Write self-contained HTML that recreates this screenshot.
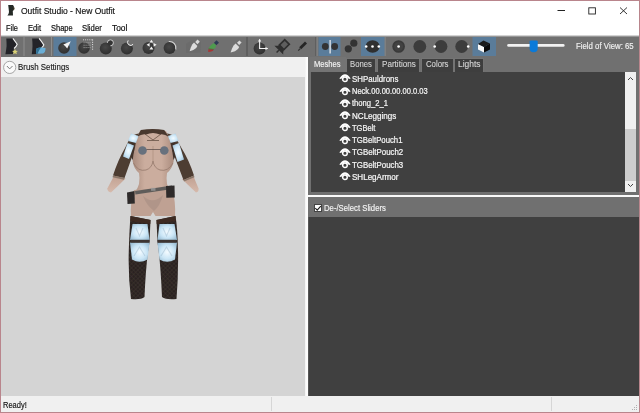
<!DOCTYPE html>
<html><head><meta charset="utf-8">
<style>
*{margin:0;padding:0;box-sizing:border-box}
html,body{width:640px;height:413px;overflow:hidden;background:#f0f0f0;font-family:"Liberation Sans",sans-serif}
.a{position:absolute}
.t{position:absolute;white-space:nowrap;line-height:1;transform-origin:0 0}
</style></head><body>
<div class="a" style="left:0;top:0;width:640px;height:413px;border-style:solid;border-color:#b9858c;border-width:1px 1.5px 1.8px 1px;background:#f0f0f0"></div>
<div class="a" style="left:1px;top:1px;width:638px;height:35px;background:#fff"></div>
<div class="t" style="left:20.80px;top:6.84px;font-size:8.70px;color:#111;transform:scaleX(0.978);-webkit-text-stroke:0.15px #111;">Outfit Studio - New Outfit</div>
<div class="t" style="left:5.50px;top:23.55px;font-size:8.80px;color:#111;transform:scaleX(0.846);-webkit-text-stroke:0.2px #111;">File</div>
<div class="t" style="left:27.65px;top:23.55px;font-size:8.80px;color:#111;transform:scaleX(0.864);-webkit-text-stroke:0.2px #111;">Edit</div>
<div class="t" style="left:50.60px;top:23.55px;font-size:8.80px;color:#111;transform:scaleX(0.849);-webkit-text-stroke:0.2px #111;">Shape</div>
<div class="t" style="left:82.00px;top:23.55px;font-size:8.80px;color:#111;transform:scaleX(0.878);-webkit-text-stroke:0.2px #111;">Slider</div>
<div class="t" style="left:112.00px;top:23.55px;font-size:8.80px;color:#111;transform:scaleX(0.954);-webkit-text-stroke:0.2px #111;">Tool</div>
<svg class="a" style="left:0;top:0" width="640" height="20" viewBox="0 0 640 20">
<path d="M8.2 5 L13 5 Q14.4 7.2 14.6 8.8 Q14 10.2 12.8 11 L13 15.5 L7.4 15.5 Q8.8 14 9 12 Q8.6 8 8.2 5Z" fill="#252a26"/>
<path d="M13.6 7.2 Q14.8 8.6 13.8 10" stroke="#b08850" stroke-width="0.5" fill="none" opacity="0.7"/>
<rect x="557.5" y="10" width="7.5" height="1" fill="#222"/>
<rect x="588.8" y="7.8" width="6.6" height="6.2" fill="none" stroke="#222" stroke-width="0.9"/>
<path d="M620 7.5 L627 14 M627 7.5 L620 14" stroke="#222" stroke-width="0.9"/>
</svg>
<div class="a" style="left:1px;top:36px;width:638px;height:21px;background:#707070"></div>
<svg class="a" style="left:0;top:0" width="640" height="60" viewBox="0 0 640 60">
<defs>
<radialGradient id="dk" cx="0.45" cy="0.4" r="0.6"><stop offset="0" stop-color="#484848"/><stop offset="1" stop-color="#2f2f2f"/></radialGradient>
</defs>
<rect x="1" y="35.5" width="638" height="1.2" fill="#a8a8a8"/>
<!-- separators -->
<rect x="23.5" y="37" width="1" height="19" fill="#8d8d8d"/>
<rect x="51" y="37" width="1" height="19" fill="#8d8d8d"/>
<rect x="246.5" y="37" width="1" height="19" fill="#4e4e4e"/>
<rect x="315.5" y="37" width="1" height="19" fill="#4e4e4e"/>
<rect x="316.5" y="37" width="1" height="19" fill="#8d8d8d"/>
<rect x="384.5" y="37" width="1" height="19" fill="#8d8d8d"/>
<!-- blue selected -->
<rect x="53.5" y="37" width="23" height="19" fill="#5a7c9a"/>
<rect x="318.5" y="37" width="22" height="19" fill="#5a7c9a"/>
<rect x="361" y="37" width="23.5" height="19" fill="#5a7c9a"/>
<rect x="472.5" y="37" width="23.5" height="19" fill="#5a7c9a"/>
<!-- icon1 -->
<path d="M6.3 38.5 L12.9 38.5 Q15 41.5 17 44.2 Q16 46.5 14 48.3 L13 54 L5.4 54.2 Q6.2 50 6.6 46 Q6.6 42 6.3 38.5Z" fill="#232328"/>
<path d="M12.9 38.3 Q15.2 41.3 17.2 44.2 Q16.2 46.8 14 48.5" stroke="#f0f0f0" stroke-width="1.1" fill="none"/>
<path d="M15 48.9 L15.9 50.8 L17.9 51 L16.4 52.3 L16.8 54.3 L15 53.3 L13.2 54.3 L13.6 52.3 L12.1 51 L14.1 50.8Z" fill="#d9d175"/>
<!-- icon2 -->
<path d="M32.1 38.5 L39 38.5 Q41.5 41.5 43.6 45 Q42.6 46.8 41.5 47.5 L38 54 L31.8 54.2 Q32.4 50 32.5 46 Q32.5 42 32.1 38.5Z" fill="#232328"/>
<path d="M39.1 38.3 Q41.8 41.5 43.8 44.9 Q43 46.6 41.6 47.6" stroke="#f0f0f0" stroke-width="1.1" fill="none"/>
<path d="M36.5 48.5 Q40 46.8 45.5 48 Q45.8 52 43 53.6 L36.3 53.8 Q36 51 36.5 48.5Z" fill="#6aaed6"/>
<path d="M36.5 48.5 Q39 47.5 41 47.6 Q39 50 37.5 53.8 L36.3 53.8 Q36 51 36.5 48.5Z" fill="#2f6f92"/>
<!-- icon3 brush -->
<circle cx="64" cy="48" r="5.8" fill="url(#dk)"/>
<path d="M70.8 41.3 L63.3 44.6 Q65.4 46.2 67.2 48.6 Z" fill="#f4f4f4"/>
<!-- icon4 select -->
<circle cx="84" cy="48" r="5.8" fill="url(#dk)"/>
<path d="M83 39.8 H93" stroke="#dcdcdc" stroke-width="0.9" stroke-dasharray="1 1.1" fill="none"/>
<path d="M92.6 39.5 V50" stroke="#e8e8e8" stroke-width="1" stroke-dasharray="1 1.3" fill="none"/>
<path d="M83.5 42.8 H91 M83.5 45.2 H91 M83.5 47.6 H91" stroke="#b8b8b8" stroke-width="0.9" stroke-dasharray="1.2 0.8" fill="none" opacity="0.8"/>
<!-- icon5 inflate -->
<circle cx="105.8" cy="48.5" r="6" fill="url(#dk)"/>
<circle cx="110.4" cy="42.8" r="3" fill="#343434"/>
<path d="M107.4 42.8 A3 3 0 1 1 110.4 45.8" stroke="#d8d8d8" stroke-width="0.9" fill="none"/>
<!-- icon6 deflate -->
<circle cx="126.9" cy="48.5" r="6" fill="url(#dk)"/>
<circle cx="130.4" cy="42.6" r="3.1" fill="#707070"/>
<path d="M128.2 40.4 A3.1 3.1 0 1 0 133.1 44.2" stroke="#ececec" stroke-width="1" fill="none"/>
<!-- icon7 move -->
<circle cx="148.5" cy="48" r="6" fill="url(#dk)"/>
<path d="M151.4 39.8 L153.3 42.6 L149.5 42.6Z M146.6 44.8 L149.6 42.9 L149.6 46.7Z M156.6 44.8 L153.6 42.9 L153.6 46.7Z M151.4 46.4 L153.4 49.6 L149.4 49.6Z" fill="#f2f2f2"/>
<!-- icon8 smooth -->
<circle cx="169.6" cy="48" r="6" fill="url(#dk)"/>
<path d="M168.8 41.5 A6.5 6.5 0 0 1 175.8 49.5" stroke="#d4d4d4" stroke-width="1.1" fill="none"/>
<!-- icon9 mask brush -->
<path d="M186 44 L192 40 L201 41.5 L200.5 52.5 L186 53Z" fill="#686868" opacity="0.55"/>
<path d="M197.6 39.6 L199.8 41.8 L197.4 44.2 L195.2 42Z" fill="#d8d8d8"/>
<path d="M194 42.6 L197.4 46 Q196.6 48.6 193.4 50 L189.6 51.2 L190.8 47.6 Q192 44 194 42.6Z" fill="#dcdcdc"/>
<!-- icon10 weight brush -->
<path d="M216.5 40.3 L219 42.7 L216.2 45.3 L213.8 42.9Z" fill="#2e3b55"/>
<path d="M213.8 42.9 L216.2 45.3 Q216.2 48 213.5 49 L208.6 48.8 Q209 46 213.8 42.9Z" fill="#4f9b4f"/>
<path d="M208.6 48.6 L213.7 48.9 L213.5 49.8 L208.4 49.6Z" fill="#555f30"/>
<path d="M208.3 49.6 L213.5 49.8 Q213 51.8 208.2 52Z" fill="#a83535"/>
<!-- icon11 color brush -->
<path d="M239.4 40.4 L241.6 42.6 L239.2 45 L237 42.8Z" fill="#d8d8d8"/>
<path d="M235.6 43.4 L239.2 47 Q238.4 49.8 235 51.2 L230.6 52.4 L232 48.4 Q233.4 44.8 235.6 43.4Z" fill="#dcdcdc"/>
<!-- icon12 transform -->
<circle cx="259.6" cy="48.5" r="6" fill="url(#dk)"/>
<path d="M259.6 39.5 V48.5 H267.5" stroke="#f2f2f2" stroke-width="1.1" fill="none"/>
<path d="M258 41.5 L259.6 38.8 L261.2 41.5Z M265.5 46.9 L268.2 48.5 L265.5 50.1Z" fill="#f2f2f2"/>
<!-- icon13 pin -->
<g transform="translate(-0.5 1.5) rotate(45 282 46)">
<rect x="278.8" y="38.2" width="6.4" height="7.6" fill="#5e5e5e" stroke="#2e2e2e" stroke-width="1.7"/>
<path d="M278.8 45.5 Q278 48 275.8 49.8 L288.2 49.8 Q286 48 285.2 45.5Z" fill="#2e2e2e"/>
<path d="M282 49.8 V53" stroke="#2e2e2e" stroke-width="1.4"/>
</g>
<!-- icon14 pencil -->
<path d="M305 41.4 L307 43.4 L301.2 49.2 L299.2 47.2Z" fill="#252525"/>
<path d="M299.6 48.2 L300.6 49.2 L298.6 51 L297.8 50.2Z" fill="#333"/>
<!-- icon15 mirror -->
<circle cx="325.3" cy="46.5" r="3.4" fill="#333"/>
<circle cx="334.7" cy="46.5" r="3.4" fill="#333"/>
<rect x="329.5" y="40" width="1.2" height="13.5" fill="#f4f4f4"/>
<!-- icon16 two circles -->
<circle cx="348.3" cy="48.8" r="3.6" fill="#333"/>
<circle cx="353.8" cy="43.2" r="3.6" fill="#333"/>
<!-- icon17 -->
<ellipse cx="372.6" cy="46.5" rx="7" ry="6.2" fill="#2f2f2f"/>
<circle cx="366.2" cy="46.5" r="1.3" fill="#fff"/>
<circle cx="372.5" cy="46.5" r="1.3" fill="#fff"/>
<circle cx="378.8" cy="46.5" r="1.3" fill="#fff"/>
<!-- icon18 -->
<circle cx="398.6" cy="46.5" r="6.3" fill="#3a3a3a"/>
<circle cx="398.6" cy="46.5" r="4.5" fill="#424242"/>
<circle cx="398.6" cy="46.5" r="1.3" fill="#fff"/>
<!-- icon19 -->
<circle cx="419.8" cy="46.5" r="6.4" fill="#3c3c3c"/>
<!-- icon20 -->
<circle cx="441" cy="46.5" r="6.4" fill="#3c3c3c"/>
<circle cx="434.7" cy="46.5" r="1.3" fill="#fff"/>
<!-- icon21 -->
<circle cx="461.7" cy="46.5" r="6.4" fill="#3c3c3c"/>
<circle cx="468.2" cy="46.5" r="1.3" fill="#fff"/>
<!-- cube -->
<path d="M478 44 L484 47 L484 52.5 L478 49.5Z" fill="#f8f8f8"/>
<path d="M478 44 L483.5 40.5 L490 43.5 L484 47Z" fill="#1a1a1a"/>
<path d="M484 47 L490 43.5 L490 49.5 L484 52.5Z" fill="#0a0a0a"/>
<!-- slider -->
<rect x="507.2" y="43.9" width="57.4" height="2.9" rx="1.4" fill="#f2f2f2"/>
<path d="M529.6 41.6 Q529.6 40.4 531 40.4 L536.3 40.4 Q537.7 40.4 537.7 41.6 L537.7 48.4 Q537.7 52.2 533.65 52.2 Q529.6 52.2 529.6 48.4Z" fill="#0a7ad9"/>
</svg>
<div class="t" style="left:575.50px;top:42.35px;font-size:8.80px;color:#f2f2f2;transform:scaleX(0.889);-webkit-text-stroke:0.15px #f2f2f2;">Field of View: 65</div>
<div class="a" style="left:1px;top:57px;width:304px;height:20px;background:#f0f0f0"></div>
<svg class="a" style="left:0;top:55px" width="30" height="25" viewBox="0 55 30 25">
<circle cx="9.7" cy="67.4" r="6.1" fill="#fafafa" stroke="#9c9c9c" stroke-width="0.9"/>
<path d="M6.9 66 L9.7 68.9 L12.5 66" stroke="#7c7c7c" stroke-width="1" fill="none"/>
</svg>
<div class="t" style="left:17.75px;top:63.45px;font-size:8.80px;color:#1a1a1a;transform:scaleX(0.896);-webkit-text-stroke:0.15px #1a1a1a;">Brush Settings</div>
<div class="a" style="left:1px;top:77px;width:304px;height:319px;background:#d4d4d4"></div>
<svg class="a" style="left:95px;top:120px" width="115" height="185" viewBox="95 120 115 185">
<defs>
<linearGradient id="skin" x1="0" y1="0" x2="1" y2="0"><stop offset="0" stop-color="#a88a7c"/><stop offset="0.3" stop-color="#cbad9e"/><stop offset="0.7" stop-color="#cbad9e"/><stop offset="1" stop-color="#a88a7c"/></linearGradient>
<linearGradient id="arm" x1="0" y1="0" x2="0" y2="1"><stop offset="0" stop-color="#c09f90"/><stop offset="1" stop-color="#d6baac"/></linearGradient>
<radialGradient id="glow" cx="0.5" cy="0.5" r="0.7"><stop offset="0" stop-color="#f4fbff"/><stop offset="0.5" stop-color="#cbe6f6"/><stop offset="1" stop-color="#8fb4cc"/></radialGradient>
<pattern id="net" width="3" height="3" patternUnits="userSpaceOnUse" patternTransform="rotate(45)"><rect width="3" height="3" fill="#2a2320"/><rect width="0.5" height="3" fill="#3e3531"/><rect width="3" height="0.5" fill="#3e3531"/></pattern>
<filter id="bl" x="-20%" y="-20%" width="140%" height="140%"><feGaussianBlur stdDeviation="0.5"/></filter>
</defs>
<g filter="url(#bl)">
<!-- forearms -->
<path d="M115 174 L125.5 178.5 Q118 186 111 192.5 Q107.5 192 107.3 188.5 Z" fill="url(#arm)"/>
<path d="M193.4 176 L182 179 Q189 186 196 192.5 Q199 192 198.5 188.5 Z" fill="url(#arm)"/>
<!-- yoke -->
<path d="M131 136 Q153 127 175 136 L176 146 L130 146Z" fill="#4d3c31"/>
<!-- torso -->
<path d="M140 131 Q153 129 166 131 L171 141 Q176 150 173.5 162 Q172 169 167 173 Q166 178 167 184 Q168 188 171 190 L135 192 Q138 188 139 184 Q140 178 139 173 Q134 169 132.8 162 Q130.5 150 135 141Z" fill="url(#skin)"/>
<path d="M133.5 163 Q138 172 146 170 Q152 168 153 161 Q154 168 160 170 Q168 172 173 163" stroke="#9a7e70" stroke-width="0.9" fill="none"/>
<path d="M153 146 L153 161" stroke="#b09282" stroke-width="0.8"/>
<!-- hips -->
<path d="M134 190 L172 187 Q176 203 175 216 L155.5 216 L153 212 L150.5 216 L131 216 Q130 203 134 190Z" fill="#bfa193"/>
<path d="M143 196 Q153 205 163 195 Q160 206 154 211 Q147 206 143 196Z" fill="#9a857a" opacity="0.4"/>
<!-- sleeves -->
<path d="M129 140 L137 137 L134.5 150 L124.5 178 L113 175.5 Q118 160 125 148Z" fill="#4d3c31"/>
<path d="M177 140 L169 137 L172 150 L183.5 180 L194 175.5 Q189 160 181.5 148Z" fill="#4d3c31"/>
<path d="M113 175.5 L124.5 178 L124 179.8 L112.5 177.2Z" fill="#8a776a"/>
<path d="M194 175.5 L183.5 180 L184 181.6 L194.5 177.2Z" fill="#8a776a"/>
<path d="M135 141 L132.8 160 L130 155 L131 143Z" fill="#3f3029"/>
<path d="M171 141 L173.5 160 L176 155 L175 143Z" fill="#3f3029"/>
<!-- collar -->
<path d="M140.8 130 Q153 128 164.2 130 L169 137 Q164 133.5 160 134.5 Q153 131.5 146 134.5 Q142 133.5 137 137Z" fill="#4a382e"/>
<path d="M145 134 L153 140 L161 134 M147 140.5 L159 140.5" stroke="#5a463a" stroke-width="0.7" fill="none"/>
<!-- shoulder pads -->
<path d="M131 133.5 L138.5 136 L136 143 L128 141Z" fill="url(#glow)"/>
<path d="M127.5 143 L134 145.5 L129 159 L123 156.5Z" fill="url(#glow)"/>
<path d="M175.5 133.5 L168 136 L170.5 143 L178.5 141Z" fill="url(#glow)"/>
<path d="M179 143 L172.5 145.5 L177.5 162 L184 159.5Z" fill="url(#glow)"/>
<!-- cups -->
<circle cx="142.5" cy="150.5" r="4.3" fill="#67717d"/>
<circle cx="164.3" cy="150.5" r="4.3" fill="#67717d"/>
<path d="M146.5 149.5 L160.5 149.5" stroke="#3a3030" stroke-width="0.6"/>
<!-- belt -->
<path d="M135 191 L172 185.5 L172.4 189 L135.4 194.5Z" fill="#5e5c5a"/>
<rect x="151" y="187.8" width="4.5" height="3" fill="#a0a0a0" opacity="0.7"/>
<path d="M127 192.5 L134.5 191 L134.8 203.5 L127.5 204Z" fill="#2e2c2b"/>
<path d="M166 186 L174.5 185.5 L174.8 197.5 L166.3 197.8Z" fill="#2e2c2b"/>
<!-- legs -->
<path d="M130.5 216 L150.5 220 L149.5 242 Q146 262 144.5 297 Q141 300 131 299 Q128 275 128.8 250 Q129.5 228 130.5 216Z" fill="url(#net)"/>
<path d="M175.5 216 L156.5 220 L157.5 242 Q160.5 262 162 297 Q166 300 176.5 299 Q178.5 275 178 250 Q177.5 228 175.5 216Z" fill="url(#net)"/>
<path d="M130.5 216 L150.5 220 L150.3 224 L130.3 221Z" fill="#3e2a22"/>
<path d="M175.5 216 L156.5 220 L156.7 224 L175.7 221Z" fill="#3e2a22"/>
<!-- knee pads -->
<path d="M132.5 224 L147.5 224 L149.5 240 L130 240Z" fill="url(#glow)"/>
<path d="M130 242.5 L149.5 242.5 L147.5 259.5 Q139.5 264 132 259.5Z" fill="url(#glow)"/>
<path d="M159.5 224 L174.5 224 L177 240 L157.5 240Z" fill="url(#glow)"/>
<path d="M157.5 242.5 L177 242.5 L175 259.5 Q167 264 159.5 259.5Z" fill="url(#glow)"/>
<path d="M136 228 L139.5 236 L143 228 M134 256 L139.5 247 L145 256" stroke="#88a6bc" stroke-width="1.1" fill="none" opacity="0.35"/>
<path d="M163 228 L166.5 236 L170 228 M161 256 L166.5 247 L172 256" stroke="#88a6bc" stroke-width="1.1" fill="none" opacity="0.35"/>
<rect x="130.5" y="239.8" width="19" height="2.8" fill="#3e3430"/>
<rect x="157.5" y="239.8" width="19" height="2.8" fill="#3e3430"/>
</g>
</svg>

<div class="a" style="left:304.5px;top:57px;width:3.6px;height:339px;background:linear-gradient(90deg,rgba(240,240,240,0.3) 0%,#fbfbfb 40%,#fdfdfd 85%,#a0a0a0 100%)"></div>
<div class="a" style="left:308px;top:57px;width:330.5px;height:339px;background:#707070"></div>
<div class="a" style="left:310.5px;top:72px;width:325.7px;height:120px;background:#404040"></div>
<div class="a" style="left:309.5px;top:57px;width:36px;height:15px;background:#747474"></div>
<div class="t" style="left:313.60px;top:60.15px;font-size:8.80px;color:#f4f4f4;transform:scaleX(0.863);-webkit-text-stroke:0.15px #f4f4f4;">Meshes</div>
<div class="a" style="left:345.50px;top:57.75px;width:30.80px;height:14.25px;background:#3e3e3e;border:1px solid #747474;border-bottom:none"></div>
<div class="t" style="left:349.90px;top:60.15px;font-size:8.80px;color:#d4d4d4;transform:scaleX(0.878);-webkit-text-stroke:0.12px #d4d4d4;">Bones</div>
<div class="a" style="left:376.80px;top:57.75px;width:43.40px;height:14.25px;background:#3e3e3e;border:1px solid #747474;border-bottom:none"></div>
<div class="t" style="left:381.90px;top:60.15px;font-size:8.80px;color:#d4d4d4;transform:scaleX(0.920);-webkit-text-stroke:0.12px #d4d4d4;">Partitions</div>
<div class="a" style="left:420.50px;top:57.75px;width:33.20px;height:14.25px;background:#3e3e3e;border:1px solid #747474;border-bottom:none"></div>
<div class="t" style="left:425.60px;top:60.15px;font-size:8.80px;color:#d4d4d4;transform:scaleX(0.885);-webkit-text-stroke:0.12px #d4d4d4;">Colors</div>
<div class="a" style="left:454.00px;top:57.75px;width:29.75px;height:14.25px;background:#3e3e3e;border:1px solid #747474;border-bottom:none"></div>
<div class="t" style="left:457.50px;top:60.15px;font-size:8.80px;color:#d4d4d4;transform:scaleX(0.958);-webkit-text-stroke:0.12px #d4d4d4;">Lights</div>
<div class="t" style="left:351.70px;top:74.85px;font-size:8.80px;color:#f6f6f6;transform:scaleX(0.895);-webkit-text-stroke:0.22px #f6f6f6;">SHPauldrons</div>
<svg class="a" style="left:338.5px;top:74.30px" width="13" height="10" viewBox="0 0 13 10"><path d="M0.3 4.6 Q6 -4 11.7 4.6 L10 5.1 Q6 -0.3 2 5.1Z" fill="#fff"/><circle cx="5.95" cy="5.2" r="2.3" fill="#404040" stroke="#fff" stroke-width="1.5"/></svg>
<div class="t" style="left:351.70px;top:87.11px;font-size:8.80px;color:#f6f6f6;transform:scaleX(0.854);-webkit-text-stroke:0.22px #f6f6f6;">Neck.00.00.00.00.0.03</div>
<svg class="a" style="left:338.5px;top:86.56px" width="13" height="10" viewBox="0 0 13 10"><path d="M0.3 4.6 Q6 -4 11.7 4.6 L10 5.1 Q6 -0.3 2 5.1Z" fill="#fff"/><circle cx="5.95" cy="5.2" r="2.3" fill="#404040" stroke="#fff" stroke-width="1.5"/></svg>
<div class="t" style="left:351.70px;top:99.37px;font-size:8.80px;color:#f6f6f6;transform:scaleX(0.865);-webkit-text-stroke:0.22px #f6f6f6;">thong_2_1</div>
<svg class="a" style="left:338.5px;top:98.82px" width="13" height="10" viewBox="0 0 13 10"><path d="M0.3 4.6 Q6 -4 11.7 4.6 L10 5.1 Q6 -0.3 2 5.1Z" fill="#fff"/><circle cx="5.95" cy="5.2" r="2.3" fill="#404040" stroke="#fff" stroke-width="1.5"/></svg>
<div class="t" style="left:351.70px;top:111.63px;font-size:8.80px;color:#f6f6f6;transform:scaleX(0.915);-webkit-text-stroke:0.22px #f6f6f6;">NCLeggings</div>
<svg class="a" style="left:338.5px;top:111.08px" width="13" height="10" viewBox="0 0 13 10"><path d="M0.3 4.6 Q6 -4 11.7 4.6 L10 5.1 Q6 -0.3 2 5.1Z" fill="#fff"/><circle cx="5.95" cy="5.2" r="2.3" fill="#404040" stroke="#fff" stroke-width="1.5"/></svg>
<div class="t" style="left:351.70px;top:123.89px;font-size:8.80px;color:#f6f6f6;transform:scaleX(0.851);-webkit-text-stroke:0.22px #f6f6f6;">TGBelt</div>
<svg class="a" style="left:338.5px;top:123.34px" width="13" height="10" viewBox="0 0 13 10"><path d="M0.3 4.6 Q6 -4 11.7 4.6 L10 5.1 Q6 -0.3 2 5.1Z" fill="#fff"/><circle cx="5.95" cy="5.2" r="2.3" fill="#404040" stroke="#fff" stroke-width="1.5"/></svg>
<div class="t" style="left:351.70px;top:136.15px;font-size:8.80px;color:#f6f6f6;transform:scaleX(0.882);-webkit-text-stroke:0.22px #f6f6f6;">TGBeltPouch1</div>
<svg class="a" style="left:338.5px;top:135.60px" width="13" height="10" viewBox="0 0 13 10"><path d="M0.3 4.6 Q6 -4 11.7 4.6 L10 5.1 Q6 -0.3 2 5.1Z" fill="#fff"/><circle cx="5.95" cy="5.2" r="2.3" fill="#404040" stroke="#fff" stroke-width="1.5"/></svg>
<div class="t" style="left:351.70px;top:148.41px;font-size:8.80px;color:#f6f6f6;transform:scaleX(0.895);-webkit-text-stroke:0.22px #f6f6f6;">TGBeltPouch2</div>
<svg class="a" style="left:338.5px;top:147.86px" width="13" height="10" viewBox="0 0 13 10"><path d="M0.3 4.6 Q6 -4 11.7 4.6 L10 5.1 Q6 -0.3 2 5.1Z" fill="#fff"/><circle cx="5.95" cy="5.2" r="2.3" fill="#404040" stroke="#fff" stroke-width="1.5"/></svg>
<div class="t" style="left:351.70px;top:160.67px;font-size:8.80px;color:#f6f6f6;transform:scaleX(0.895);-webkit-text-stroke:0.22px #f6f6f6;">TGBeltPouch3</div>
<svg class="a" style="left:338.5px;top:160.12px" width="13" height="10" viewBox="0 0 13 10"><path d="M0.3 4.6 Q6 -4 11.7 4.6 L10 5.1 Q6 -0.3 2 5.1Z" fill="#fff"/><circle cx="5.95" cy="5.2" r="2.3" fill="#404040" stroke="#fff" stroke-width="1.5"/></svg>
<div class="t" style="left:351.70px;top:172.93px;font-size:8.80px;color:#f6f6f6;transform:scaleX(0.914);-webkit-text-stroke:0.22px #f6f6f6;">SHLegArmor</div>
<svg class="a" style="left:338.5px;top:172.38px" width="13" height="10" viewBox="0 0 13 10"><path d="M0.3 4.6 Q6 -4 11.7 4.6 L10 5.1 Q6 -0.3 2 5.1Z" fill="#fff"/><circle cx="5.95" cy="5.2" r="2.3" fill="#404040" stroke="#fff" stroke-width="1.5"/></svg>
<div class="a" style="left:624.8px;top:72px;width:11.4px;height:120px;background:#f0f0f0"></div>
<div class="a" style="left:624.8px;top:129px;width:11.4px;height:52px;background:#cdcdcd"></div>
<svg class="a" style="left:625px;top:72px" width="11" height="120" viewBox="0 0 11 120">
<path d="M3 8 L5.5 5.5 L8 8" stroke="#444" stroke-width="1" fill="none"/>
<path d="M3 112 L5.5 114.5 L8 112" stroke="#444" stroke-width="1" fill="none"/>
</svg>
<div class="a" style="left:308px;top:194.5px;width:330.5px;height:2.5px;background:#fafafa"></div>
<div class="a" style="left:308px;top:197px;width:330.5px;height:19.5px;background:#707070"></div>
<div class="a" style="left:308px;top:216.5px;width:330.5px;height:179.5px;background:#404040;border-left:1.5px solid #565656"></div>
<div class="a" style="left:313.6px;top:203.75px;width:8px;height:8.25px;background:#fff;border:0.7px solid #444"></div>
<svg class="a" style="left:313px;top:203px" width="10" height="10" viewBox="0 0 10 10"><path d="M2.3 5.2 L4.2 7.1 L7.8 3.1" stroke="#1a1a1a" stroke-width="1.1" fill="none"/></svg>
<div class="t" style="left:324.25px;top:204.05px;font-size:8.80px;color:#f4f4f4;transform:scaleX(0.879);-webkit-text-stroke:0.15px #f4f4f4;">De-/Select Sliders</div>
<div class="a" style="left:1px;top:396px;width:637.4px;height:15.2px;background:#f0f0f0"></div>
<div class="a" style="left:271px;top:397px;width:1px;height:14px;background:#d6d6d6"></div>
<div class="a" style="left:550.5px;top:397px;width:1px;height:14px;background:#d6d6d6"></div>
<svg class="a" style="left:630px;top:403px" width="9" height="9" viewBox="0 0 9 9"><g fill="#b0b0b0"><rect x="6" y="2" width="1" height="1"/><rect x="4" y="4" width="1" height="1"/><rect x="6" y="4" width="1" height="1"/><rect x="2" y="6" width="1" height="1"/><rect x="4" y="6" width="1" height="1"/><rect x="6" y="6" width="1" height="1"/></g></svg>
<div class="t" style="left:2.50px;top:400.85px;font-size:8.80px;color:#111;transform:scaleX(0.852);-webkit-text-stroke:0.15px #111;">Ready!</div>
</body></html>
